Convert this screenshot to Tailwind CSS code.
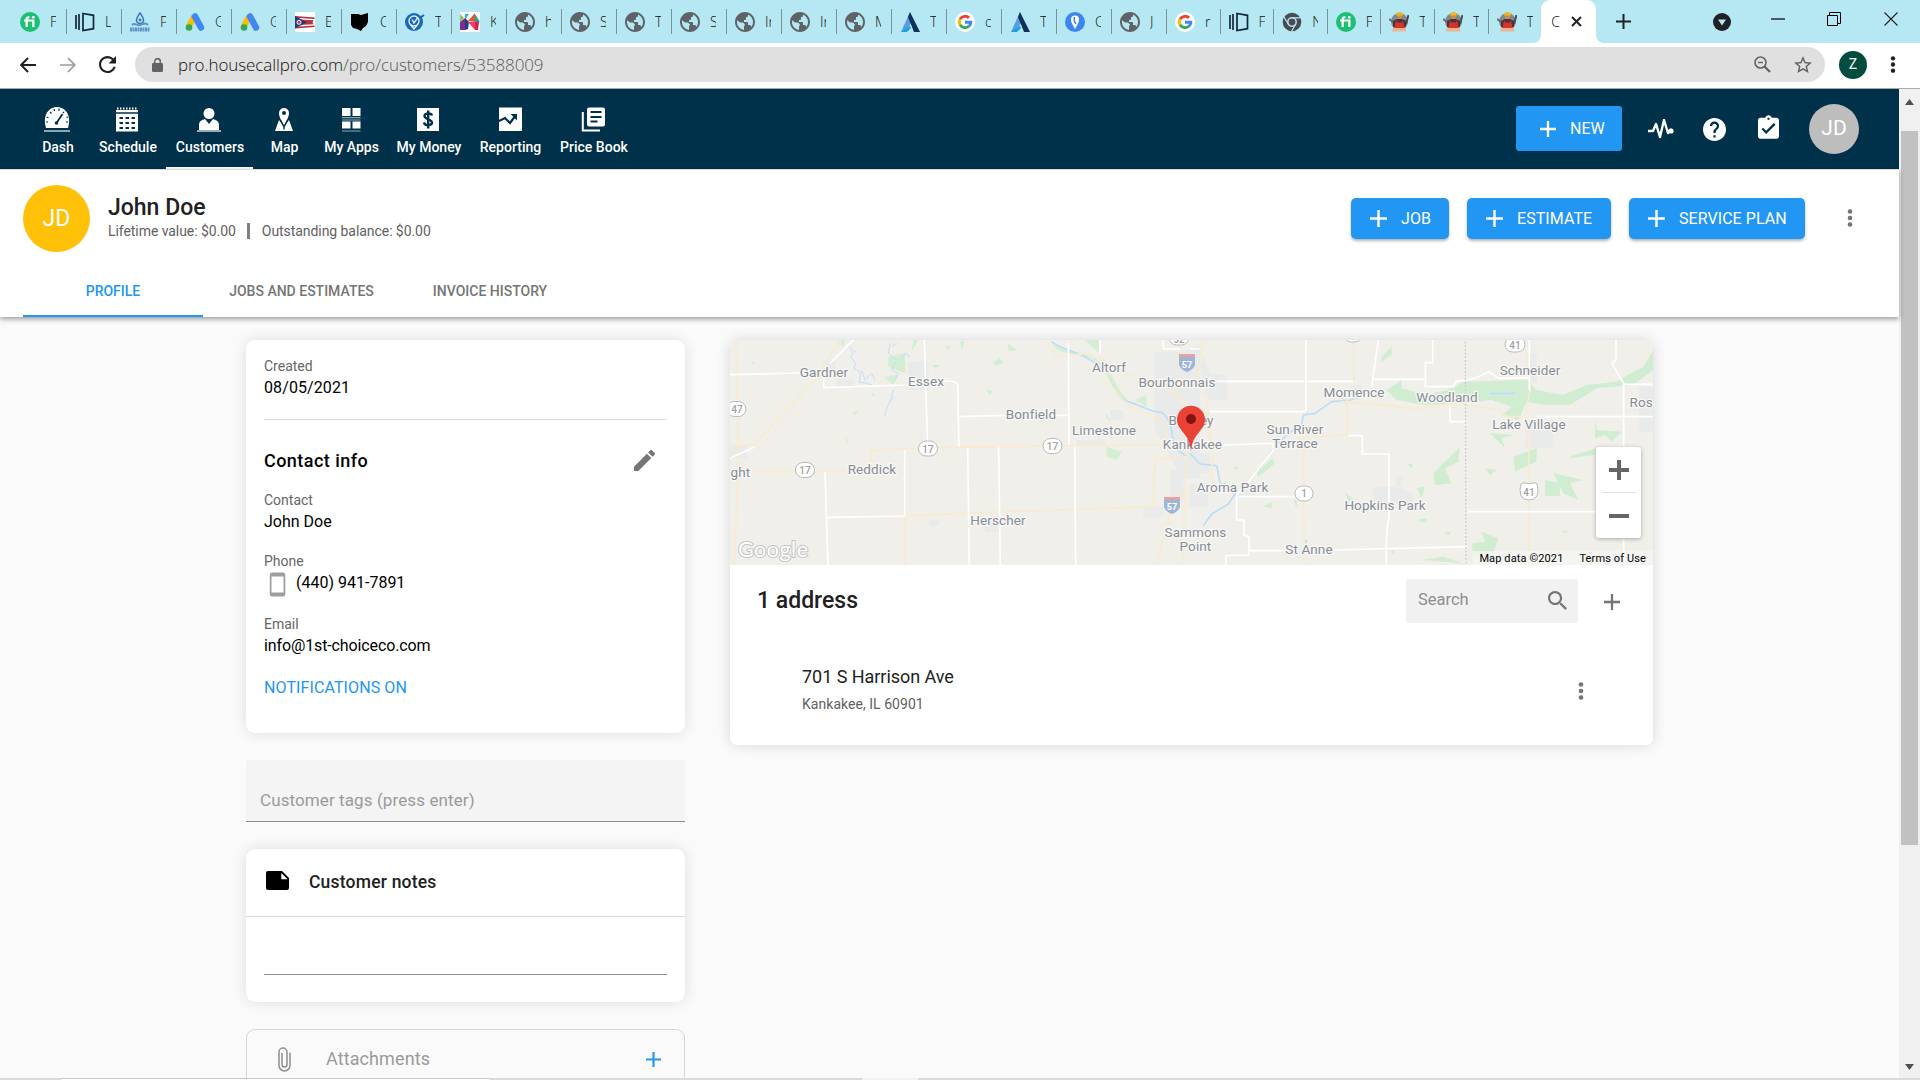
<!DOCTYPE html>
<html lang="en">
<head>
<meta charset="utf-8">
<title>John Doe - Customers</title>
<script src="https://cdn.jsdelivr.net/npm/@tailwindcss/browser@4"></script>
</head>
<body class="w-[1920px] h-[1080px] overflow-hidden bg-white font-[Roboto,sans-serif] text-black flex flex-col">

<svg class="hidden">
  <symbol id="fi" viewBox="0 0 20 20"><circle cx="10" cy="10" r="10" fill="#1dbf73"/><path d="M5.500 15V9.500H4V7.500h1.500c0-2.600 1.500-3.600 4-3.300v2C8.300 6.100 7.800 6.500 7.800 7.500H14.500v7.500h-2.300V9.500H7.800V15z" fill="#fff"/><circle cx="13.300" cy="5.300" r="1.400" fill="#fff"/></symbol>
  <symbol id="door" viewBox="0 0 20 20"><path d="M1 3v14M4 2v16M8 1.500l10.500 1.800v13.400L8 18.500z" fill="none" stroke="#14263a" stroke-width="1.700"/></symbol>
  <symbol id="drop" viewBox="0 0 20 20"><path d="M10 1c2 3 3.500 4.500 3.500 7a3.500 3.500 0 0 1-7 0c0-2.500 1.500-4 3.500-7z" fill="none" stroke="#3c78b8" stroke-width="1.600"/><circle cx="10" cy="8" r="1.400" fill="#3c78b8"/><path d="M2 13c3-3 4 1 8 0s5-3 8 0" fill="none" stroke="#5b93c9" stroke-width="2"/><path d="M0 17.500h20" stroke="#5f93cb" stroke-width="4" stroke-dasharray="2 .500"/></symbol>
  <symbol id="ads" viewBox="0 0 20 20"><path d="M9.500 4L3.500 15" stroke="#fbbc04" stroke-width="6"/><path d="M10 4.500l6 11" stroke="#4285f4" stroke-width="6.500" stroke-linecap="round"/><circle cx="4" cy="15.500" r="3.300" fill="#34a853"/></symbol>
  <symbol id="ohio" viewBox="0 0 20 20"><path fill="#fff" d="M0 0h20v20H0z"/><path d="M0 4l20 1.500-2.500 4.700L20 15 0 16.500z" fill="#b8353f"/><path d="M0 6.500l19 1.200M0 14l19-1.200" stroke="#fff" stroke-width="1.300"/><path d="M0 4l12 6.300L0 16.500z" fill="#223c7b"/><circle cx="4" cy="10.300" r="2" fill="#c33" stroke="#fff"/></symbol>
  <symbol id="state" viewBox="0 0 20 20"><path d="M1 2l7 0 3 1 7-2v9l-2 4-3 2-2 3-4-2-4-1-2-3z" fill="#000"/></symbol>
  <symbol id="pin" viewBox="0 0 20 20"><circle cx="9" cy="10" r="9" fill="#1b66b5"/><circle cx="9" cy="9" r="5" fill="none" stroke="#d8f0fa" stroke-width="1.500"/><path d="M5 12l4 5 4-5" fill="none" stroke="#d8f0fa" stroke-width="1.500"/><path d="M7 7.500l2 3.500 3.500-5" fill="none" stroke="#d8f0fa" stroke-width="1.400"/><path d="M15 6l4-3" stroke="#1b66b5" stroke-width="2"/></symbol>
  <symbol id="kk" viewBox="0 0 20 20"><path fill="#fff" d="M0 0h20v20H0z"/><path d="M0 2l4 4-4 4z" fill="#8bc34a"/><path d="M0 10l5-4v12H0z" fill="#7b2d8e"/><path d="M5 2h4l-4 6z" fill="#29b6d1"/><path d="M9 10L5 6v12l3-1z" fill="#263a8c"/><path d="M8 9l7-8v9z" fill="#e8552d"/><path d="M8 10l7 8v-8z" fill="#ef3e6d"/><path d="M15 10V2l5 8z" fill="#1aa5a0"/><path d="M15 10h4l-1 8h-3z" fill="#e01f4f"/></symbol>
  <symbol id="globe" viewBox="2 2 20 20"><path fill="#5f6368" d="M12 2C6.480 2 2 6.480 2 12s4.480 10 10 10 10-4.480 10-10S17.520 2 12 2zm-1 17.930c-3.950-.490-7-3.850-7-7.930 0-.620.080-1.210.210-1.790L7 12.500h3l2 2-1 2v3.430zm6.900-2.540c1-2-.9-2.390-1.900-2.390h-1v-2c0-.550-.450-1-1-1h-3v-2h1c.550 0 1-.450 1-1V7h1c1.100 0 1-.9 1-2v-.410c2.930 1.190 5 4.060 5 7.410 0 2.080-.8 3.970-2.100 5.390z"/></symbol>
  <symbol id="delta" viewBox="0 0 20 20"><path d="M10 0L1 20h5l5-9z" fill="#5a9be0"/><path d="M10 0l10 20h-6L8 5z" fill="#12305c"/><path d="M1 20l9-6 1 2-4 4z" fill="#12a5e8"/></symbol>
  <symbol id="goog" viewBox="0 0 20 20"><circle cx="10" cy="10" r="10" fill="#fff"/><g fill="none" stroke-width="2.900"><path d="M5 7.300a5.700 5.700 0 0 1 9-1.400" stroke="#ea4335"/><path d="M5.100 12.800a5.700 5.700 0 0 1 0-5.700" stroke="#fbbc05"/><path d="M14 14a5.700 5.700 0 0 1-9-1.400" stroke="#34a853"/><path d="M10 10.200h5.800c0 1.700-.7 3-1.800 4" stroke="#4285f4"/></g></symbol>
  <symbol id="call" viewBox="0 0 20 20"><circle cx="10" cy="10" r="10" fill="#3b86f0"/><path d="M10 17C7 12 6 10 6 7.500a4 4 0 0 1 8 0C14 10 13 12 10 17z" fill="#fff"/><path d="M9.300 5v4l1.500 3" stroke="#3b86f0" stroke-width="1.500" fill="none"/></symbol>
  <symbol id="chrome" viewBox="0 0 20 20"><circle cx="10" cy="10" r="9.300" fill="#494c50"/><circle cx="10" cy="10" r="4.200" fill="#494c50" stroke="#b5e8f2" stroke-width="1.500"/><path d="M10 5.800h8.500M6.300 12L2 5M13.700 12l-4.200 7.500" stroke="#b5e8f2" stroke-width="1.200"/></symbol>
  <symbol id="worker" viewBox="0 0 20 20"><circle cx="10.500" cy="9.500" r="8.500" fill="#7f8a8e"/><path d="M0 7l6 4" stroke="#6d6a66" stroke-width="2"/><path d="M19.500 3l-2.500 9" stroke="#4b4b4b" stroke-width="2"/><circle cx="10.500" cy="4.500" r="2.600" fill="#c98a5a"/><path d="M7 3.500a3.500 3.500 0 0 1 7 0z" fill="#f2b51c"/><path d="M4 9l4-2h5l4 2 0 6H4z" fill="#4a3436"/><path d="M7 8l1 2.500h5L14 8l1.500 8h-10z" fill="#d8322c"/><path d="M4 16h13v3.500H3z" fill="#e9b592"/></symbol>
  <symbol id="plus" viewBox="5 5 14 14"><path d="M19 13h-6v6h-2v-6H5v-2h6V5h2v6h6v2z" fill="currentColor"/></symbol>
  <symbol id="dots" viewBox="0 0 6 18"><g fill="currentColor"><circle cx="3" cy="2.500" r="2.300"/><circle cx="3" cy="9" r="2.300"/><circle cx="3" cy="15.500" r="2.300"/></g></symbol>
</svg>

<!-- Browser tab strip -->
<div class="h-[43px] shrink-0 bg-[#b5e8f2] flex pl-[11px] font-['Open_Sans',sans-serif]">
  <div id="tabs" class="flex h-full"></div>
  <div class="relative w-[55px] h-full bg-white rounded-t-[9px] flex items-center pl-[10px] text-[14px] font-light">
    <span class="absolute right-full bottom-0 size-2 bg-white"><span class="block size-2 rounded-br-lg bg-[#b5e8f2]"></span></span>
    <span class="absolute left-full bottom-0 size-2 bg-white"><span class="block size-2 rounded-bl-lg bg-[#b5e8f2]"></span></span>
    <span class="w-[10px] -mt-px">C</span>
    <svg class="ml-[10px] size-[11px]" viewBox="0 0 11 11"><path d="M1 1l9 9M10 1l-9 9" stroke="#222" stroke-width="2"/></svg>
  </div>
  <div class="flex-1 flex items-center">
    <svg class="ml-5 size-[15px]" viewBox="0 0 15 15"><path d="M7.500 0v15M0 7.500h15" stroke="#222" stroke-width="2"/></svg>
    <svg class="ml-[82px] size-[18px]" viewBox="0 0 18 18"><circle cx="9" cy="9" r="9" fill="#202124"/><path d="M5 6.500h8L9 12.500z" fill="#b5e8f2"/></svg>
    <svg class="ml-10 mb-[6px] w-[14px] h-[2px]" viewBox="0 0 14 2"><path d="M0 1h14" stroke="#000" stroke-width="1.200"/></svg>
    <svg class="ml-[42px] mb-[6px] size-[14px]" viewBox="0 0 14 14" fill="none" stroke="#000"><path d="M.5 3.500h10v10H.5zM2.500 3V.5h11v11H11"/></svg>
    <svg class="ml-[43px] mb-[6px] size-[14px]" viewBox="0 0 14 14"><path d="M.5 .5l13 13M13.500 .5l-13 13" stroke="#222" stroke-width="1.100"/></svg>
  </div>
</div>

<!-- Address bar -->
<div class="h-[46px] shrink-0 bg-white border-b border-[#a9a9a9] flex items-center pb-[2px]">
  <svg class="ml-5 size-4" viewBox="0 0 16 16" fill="none" stroke="#202124" stroke-width="2"><path d="M16 8H1.500M8 1L1.200 8 8 15"/></svg>
  <svg class="ml-6 size-4" viewBox="0 0 16 16" fill="none" stroke="#9a9a9a" stroke-width="1.700"><path d="M0 8h14.500M8 1l6.800 7L8 15"/></svg>
  <svg class="ml-[23px] size-[17px]" viewBox="4 4 16 16"><path fill="#202124" d="M17.650 6.350C16.200 4.900 14.210 4 12 4c-4.420 0-7.990 3.580-7.990 8s3.570 8 7.990 8c3.730 0 6.840-2.550 7.730-6h-2.080c-.820 2.330-3.040 4-5.650 4-3.310 0-6-2.690-6-6s2.690-6 6-6c1.660 0 3.140.690 4.220 1.780L13 11h7V4l-2.350 2.350z"/></svg>
  <div class="ml-[19px] w-[1690px] h-[35px] rounded-full bg-[#e0e0e0] flex items-center pl-[17px] pr-[13px]">
    <svg class="w-[11px] h-[14px]" viewBox="0 0 11 14"><rect y="5" width="11" height="9" rx="1.200" fill="#5f6368"/><path d="M2.700 5.500V3.500a2.800 2.800 0 0 1 5.600 0v2" fill="none" stroke="#5f6368" stroke-width="1.500"/></svg>
    <div class="ml-[15px] text-[17px] leading-none font-light tracking-[-.08px] font-['Open_Sans',sans-serif] whitespace-nowrap text-[#55585c]"><span class="text-[#111]">pro.housecallpro.com</span>/pro/customers/53588009</div>
    <div class="flex-1"></div>
    <svg class="size-[17px]" viewBox="0 0 17 17" fill="none" stroke="#5f6368"><circle cx="6.500" cy="6.500" r="5.500" stroke-width="1.600"/><path d="M10.500 10.500l5.500 5.500" stroke-width="2.200"/><path d="M4 6.500h5" stroke-width="1.400"/></svg>
    <svg class="ml-[23px] size-[18px]" viewBox="2 2 20 20"><path fill="#5f6368" d="M22 9.240l-7.190-.620L12 2 9.190 8.630 2 9.240l5.460 4.730L5.820 21 12 17.270 18.180 21l-1.630-7.030L22 9.240zM12 15.400l-3.760 2.270 1-4.280-3.320-2.880 4.380-.380L12 6.100l1.710 4.040 4.380.380-3.320 2.880 1 4.280L12 15.400z"/></svg>
  </div>
  <div class="ml-[14px] size-7 rounded-full bg-[#004d40] text-white text-[14px] flex items-center justify-center">Z</div>
  <svg class="ml-[23px] w-[6px] h-[17px] text-[#202124]"><use href="#dots"/></svg>
</div>

<div class="flex-1 min-h-0 flex">
<div class="w-[1899px] flex flex-col bg-[#fafafa]">

  <!-- Top navigation -->
  <div class="h-20 shrink-0 bg-[#00314a] text-white flex items-center pl-[26px]">
    <div class="flex h-full text-[14px] leading-5 font-medium text-center whitespace-nowrap [&>div]:flex [&>div]:flex-col [&>div]:items-center [&>div]:pt-[17px] [&_svg]:size-[26px] [&_svg]:-ml-px [&_span]:mt-[5px] [&_span]:ml-px">
      <div class="w-[63px]"><svg viewBox="0 0 26 26"><path d="M2 22C-2 9 5 1 13 1S28 9 24 22z" fill="#fff"/><path d="M0 25h26" stroke="#8fa6b2" stroke-width="2"/><path d="M12.500 17l6-9" stroke="#00314a" stroke-width="1.800"/><circle cx="12.500" cy="17" r="1.800" fill="#00314a"/><path d="M2 16h2M2.500 11l2 .8M6 6l1.500 1.500M10 3l.6 2M15 2.500V5M20 6l-1 1M24 11l-1.500.5M24 16h-2" stroke="#00314a" stroke-width="1.200"/></svg><span>Dash</span></div>
      <div class="w-[77px]"><svg viewBox="0 0 26 26"><path d="M2 4h22v21.500H2z" fill="#fff"/><path d="M3 2.500h20" stroke="#fff" stroke-width="2" stroke-dasharray="1.500 1.500"/><path d="M2 7h22" stroke="#00314a" stroke-width="1.500"/><path d="M5.500 12h16M5.500 17h16M5.500 22h16" stroke="#00314a" stroke-width="2" stroke-dasharray="3.500 2.500"/></svg><span>Schedule</span></div>
      <div class="w-[87px] relative"><svg viewBox="0 0 26 26"><circle cx="13" cy="7.500" r="5.500" fill="#fff"/><path d="M3 24v-5c0-4 3-5 6-6l4 5 4-5c3 1 6 2 6 6v5z" fill="#fff"/><path d="M1 25h24" stroke="#cdd8de" stroke-width="1.500"/></svg><span>Customers</span><i class="absolute inset-x-0 bottom-0 h-[2px] bg-white"></i></div>
      <div class="w-[62px]"><svg viewBox="0 0 26 26"><path d="M8 14L4 25h18l-4-11-5 7z" fill="#fff"/><path d="M13 20C10 14 8 10.500 8 7a5 5 0 0 1 10 0c0 3.500-2 7-5 13z" fill="#fff"/><circle cx="13" cy="7" r="2" fill="#00314a"/><path d="M9.500 14l3.500 7 3.500-7M13 21v2.500" fill="none" stroke="#00314a" stroke-width="1.400"/></svg><span>Map</span></div>
      <div class="w-[72px]"><svg viewBox="0 0 26 26"><path d="M4 2h8.500v8H4zM14.500 2h8v8h-8zM4 15.500h8.500v7H4zM14.500 15.500h8v7h-8z" fill="#fff"/><path d="M4 11.700h18.500M4 14h18.500M4 25h18.500" stroke="#8fa6b2" stroke-width="1.200"/></svg><span>My Apps</span></div>
      <div class="w-[83px]"><svg viewBox="0 0 26 26"><path d="M2 2h22v23H2z" fill="#fff"/><path d="M17 9.500C16.500 7 9.500 6.500 9.500 10s7.500 3 7.500 6.500-7.500 3.500-8 0M13.200 4.500v18" fill="none" stroke="#00314a" stroke-width="2.400"/></svg><span>My Money</span></div>
      <div class="w-20"><svg viewBox="0 0 26 26"><path d="M2 1.500h23V25H2z" fill="#fff"/><path d="M2 15l6-3 5 5 6-8" fill="none" stroke="#00314a" stroke-width="2.200"/><path d="M13.500 8h6.500v6.500z" fill="#00314a"/></svg><span>Reporting</span></div>
      <div class="w-[87px]"><svg viewBox="0 0 26 26"><rect x="7" y="1.500" width="18" height="19" rx="2" fill="#fff"/><path d="M2.800 6v18.500H20" fill="none" stroke="#fff" stroke-width="2"/><path d="M10.500 6h11M10.500 11h11M10.500 15.500h7" stroke="#00314a" stroke-width="2"/></svg><span>Price Book</span></div>
    </div>
    <div class="flex-1"></div>
    <div class="w-[106px] h-[45px] -mt-px rounded-[3px] bg-[#2196f3] flex items-center pl-6 text-[16px]"><svg class="size-4 mr-[14px]"><use href="#plus"/></svg>NEW</div>
    <svg class="ml-[26px] w-[26px] h-5" viewBox="0 0 26 20"><path d="M0 12h5l3-7 4 13 4-17 4 13 2-3h2" fill="none" stroke="#fff" stroke-width="2.400" stroke-linejoin="round"/><circle cx="23" cy="12" r="2.600" fill="#fff"/></svg>
    <svg class="ml-[29px] size-[23px]" viewBox="2 2 20 20"><path fill="#fff" d="M12 2C6.480 2 2 6.480 2 12s4.480 10 10 10 10-4.480 10-10S17.520 2 12 2zm1 17h-2v-2h2v2zm2.070-7.750l-.9.920C13.450 12.900 13 13.500 13 15h-2v-.5c0-1.100.450-2.100 1.170-2.830l1.240-1.260c.370-.360.590-.860.590-1.410 0-1.100-.9-2-2-2s-2 .9-2 2H8c0-2.210 1.790-4 4-4s4 1.790 4 4c0 .880-.360 1.680-.930 2.250z"/></svg>
    <svg class="ml-8 w-[21px] h-[24px] -mt-1" viewBox="3 1 18 20"><path fill="#fff" d="M19 3h-4.180C14.400 1.840 13.300 1 12 1c-1.300 0-2.400.840-2.820 2H5c-1.100 0-2 .9-2 2v14c0 1.100.9 2 2 2h14c1.100 0 2-.9 2-2V5c0-1.100-.9-2-2-2zm-7 0c.550 0 1 .450 1 1s-.450 1-1 1-1-.450-1-1 .450-1 1-1zm-2 14l-4-4 1.410-1.410L10 14.170l6.590-6.590L18 9l-8 8z"/></svg>
    <div class="ml-[30px] mr-10 size-[50px] rounded-full bg-[#bdbdbd] flex items-center justify-center text-[21px]">JD</div>
  </div>

  <!-- Customer header -->
  <div class="relative z-10 h-[148px] shrink-0 bg-white border-t border-[#dcdcdc] shadow-[0_2px_5px_rgba(0,0,0,.4)] flex flex-col px-[23px]">
    <div class="flex pt-[15px]">
      <div class="size-[67px] rounded-full bg-[#ffc107] text-white text-[23px] flex items-center justify-center pt-px">JD</div>
      <div class="ml-[18px] pt-[9px]">
        <div class="text-[23px] leading-7 font-medium text-[#212121]">John Doe</div>
        <div class="flex items-center text-[14px] leading-[18px] text-[#616161] tracking-[-.06px]">Lifetime value: $0.00<i class="ml-[11px] mr-3 w-[3px] h-4 bg-[#808080]"></i>Outstanding balance: $0.00</div>
      </div>
      <div class="flex-1"></div>
      <div class="flex gap-[18px] pt-[13px] text-[16px] text-white [&>div]:h-[41px] [&>div]:rounded-[5px] [&>div]:bg-[#2196f3] [&>div]:flex [&>div]:items-center [&>div]:pl-[19px] [&>div]:shadow-[0_2px_3px_rgba(0,0,0,.3)] [&_svg]:size-[17px] [&_svg]:mr-[14px] tracking-[.06px]">
        <div class="w-[98px]"><svg><use href="#plus"/></svg>JOB</div>
        <div class="w-36"><svg><use href="#plus"/></svg>ESTIMATE</div>
        <div class="w-44"><svg><use href="#plus"/></svg>SERVICE PLAN</div>
      </div>
      <svg class="ml-[42px] mr-[23px] mt-[24px] w-[6px] h-[18px] text-[#757575]"><use href="#dots"/></svg>
    </div>
    <div class="mt-auto h-[51px] flex text-[14px] font-medium text-[#757575] [&>div]:flex [&>div]:justify-center [&>div]:pt-[15px] leading-5">
      <div class="w-[180px] border-b-2 border-[#2196f3] text-[#2196f3]">PROFILE</div>
      <div class="w-[197px]">JOBS AND ESTIMATES</div>
      <div class="w-[180px]">INVOICE HISTORY</div>
    </div>
  </div>

  <!-- Body columns -->
  <div class="flex-1 min-h-0 overflow-hidden flex items-start pl-[246px] pt-[23px] gap-[45px]">
    <div class="w-[439px] flex flex-col">
      <div class="h-[393px] rounded-[9px] bg-white shadow-[0_0_14px_rgba(0,0,0,.12)] px-[18px] pt-4 text-[16px] leading-6">
        <div class="text-[14px] leading-5 text-[#666]">Created</div>
        <div class="tracking-[.1px]">08/05/2021</div>
        <div class="mt-[19px] h-px bg-[#dcdcdc]"></div>
        <div class="mt-7 h-6 flex justify-between items-center pr-3 text-[18px] font-medium tracking-[.45px]"><span class="mt-[2px]">Contact info</span>
          <svg class="size-[21px]" viewBox="3 3 18 18"><path fill="#757575" d="M3 17.250V21h3.750L17.810 9.940l-3.750-3.750L3 17.250zM20.710 7.040c.390-.390.390-1.020 0-1.410l-2.340-2.340c-.390-.390-1.020-.390-1.410 0l-1.830 1.830 3.750 3.750 1.830-1.830z"/></svg></div>
        <div class="mt-[18px] text-[14px] leading-5 text-[#666]">Contact</div>
        <div>John Doe</div>
        <div class="mt-[17px] text-[14px] leading-5 text-[#666]">Phone</div>
        <div class="flex h-6"><svg class="ml-[5px] mr-[10px] mt-px w-[17px] h-[25px] shrink-0" viewBox="0 0 17 25"><rect x=".800" y=".500" width="15.500" height="24" rx="2.500" fill="#9e9e9e"/><path d="M2.500 4.500h12v16h-12z" fill="#fff"/></svg><span>(440) 941-7891</span></div>
        <div class="mt-[19px] text-[14px] leading-5 text-[#666]">Email</div>
        <div class="tracking-[-.12px]">info@1st-choiceco.com</div>
        <div class="mt-[18px] text-[#2196f3] tracking-[.1px]">NOTIFICATIONS ON</div>
      </div>

      <div class="mt-[27px] h-[62px] rounded-t-[4px] bg-[#f4f4f4] border-b border-[#8c8c8c] pl-[14px] pt-[28px] text-[17px] leading-6 text-[#9a9a9a] tracking-[.1px]">Customer tags (press enter)</div>

      <div class="mt-[27px] h-[153px] rounded-[9px] bg-white shadow-[0_0_14px_rgba(0,0,0,.12)]">
        <div class="h-[68px] border-b border-[#dcdcdc] flex items-center pl-5 text-[17.500px] font-medium tracking-[.2px] text-[#212121]"><svg class="w-[23px] h-[19px] mr-5 -mt-[5px]" viewBox="0 0 23 19"><path d="M2 0h14l7 7v10a2 2 0 0 1-2 2H2a2 2 0 0 1-2-2V2a2 2 0 0 1 2-2z"/><path d="M15.300 2v6.200h6.300z" fill="#fff"/></svg><span>Customer notes</span></div>
        <div class="mx-[18px] h-[58px] border-b border-[#8c8c8c]"></div>
      </div>

      <div class="mt-[27px] h-[80px] rounded-[9px] border border-[#d6d6d6] flex items-start pt-[17px] pl-[31px]">
        <svg class="w-[13px] h-[25px]" viewBox="0 0 13 25" fill="none" stroke="#8f8f8f" stroke-width="1.500" stroke-linecap="round"><path d="M12 6v12.500a5.500 5.500 0 0 1-11 0V5a4 4 0 0 1 8 0v12.500a2.500 2.500 0 0 1-5 0V6.500"/></svg>
        <span class="ml-[35px] text-[18px] leading-6 text-[#9a9a9a] flex-1 tracking-[.1px]">Attachments</span>
        <svg class="size-[15px] mt-[5px] mr-[23px] text-[#2196f3]"><use href="#plus"/></svg>
      </div>
    </div>

    <div class="w-[923px] h-[405px] rounded-[7px] bg-white overflow-hidden shadow-[0_0_14px_rgba(0,0,0,.14)] flex flex-col">
      <!-- Map -->
      <div class="relative h-[225px] shrink-0 bg-[#f0efea]">
        <svg class="w-[923px] h-[225px] block" viewBox="0 0 923 225">
          <g transform="translate(-10 -10) scale(.33333)" fill="none" stroke-linejoin="round">
            <path d="M1305 65h80l55-20v400h-55l-80-150zM310 90h35l5 40h-40zM350 148h52v22h-52zM565 95h60v85h-60zM1070 330h85v17h-85zM1170 240h40v30h-40zM30 345h50v40H30zM628 571h28v18h-28zM795 585h42v20h-42zM1270 530h60v30h-60zM1350 420h40v90h-40z" fill="#e9eaea"/>
            <path d="M985 30c20 40 100 20 160 70 40 40 50 90 80 110l-15 0c-50-60-50-110-110-130-60-10-90-10-115-50zM1095 30h45v42zM505 80l50-10v60l-50-20zM490 140l45-5-15 30zM1160 350l45 15-15 25-30-10zM820 95l20-10 10 15-25 8zM865 40l25 20-25 3zM797 178l22 6-10 10zM635 105h25l-12 12zM395 250l18-8-5 14zM580 30h15l-20 35zM1245 210l35-15v35zM1155 245l20 30-15-10zM355 30h20l-5 20zM675 45l15 5-5 12zM380 320l3 18-6 0zM720 35l15-5-10 30z" fill="#d3eed3"/>
            <path d="M390 50l8 20-6 10 15 20-5 15 20 12-4 30 22 2 15 6M400 60l10 10M425 120l10 30 20-20 10 20M510 40l-5 30 25 20-15 30 20 10-10 20M545 90l10-20 15 10M520 180l-8 30-10 20-8 28M525 200l-12 12M515 50l15-10M455 190l8 8M98 102l3-6" stroke="#bfe0f8" stroke-width="3"/>
            <path d="M995 35c30 30 80 20 150 80 40 50 40 90 80 100 50 15 60 30 100 32 30 20 30 60 35 90s50 40 80 75" stroke="#b9def9" stroke-width="5"/>
            <path d="M47 30l10 340-15 335M30 355l75-15 180-190 70-110 10-10M100 422h285M450 395l5-35 230-8 380-5 280-2M555 705v-148l180-7 565-20 5-145 100-5M980 35l30 45 100-10 60 40 170 70 60 40M1140 75c20 80 60 150 130 170 60 20 70 50 75 100M1375 30l3 190M1410 370l-15 50-5 280M1310 700l15-60 40-140 20-15h55" stroke="#f8ebce" stroke-width="5"/>
            <path d="M30 134l210-5M30 385l75-35M330 100l70-70M311 120v53l250-8 120-12q30 0 32 12l4 185M613 30l10 325M717 260l140-4h190M1045 40l2 305M1140 30v42M1330 30v27h50M315 425l9 280M322 562l232-4V360M743 355l5 350M836 352l5 353M1064 350l3 355" stroke="#fff" stroke-width="5"/>
          </g>
          <g transform="translate(460 -10) scale(.33333)" fill="none" stroke-linejoin="round">
            <path d="M0 370h60v60H0zM0 460h55v70H0zM40 75l20 55 50 5v75H55L30 120zM480 165h35v45h-35zM550 470h70l50 20v30H550zM1010 275h78v80h-85zM1010 70h30v90h-30zM1348 170h40v135h-40zM620 440l15-5v35h-15zM135 480h60v25h-60z" fill="#e9eaea"/>
            <path d="M590 180l45-30v25l75 20 60-15 50-25 190-5 30 30 80 15 70-30 90-10 50-30 30-15 30-50v60l-60 45-110 10-80 50h-70l-60-10-25 55-50-15 30-25-60-20-80 10-120 5-85-15zM575 80l30-30v25l-30 20zM970 380l70-25v40l-65 30zM730 430l80-80-5 45-40 20 20 45-50 5zM1065 450l45 10v38h-45zM1090 430l90 20-40 10 25 50-45-20zM845 640l40-5-10-30 50 20-15 45-60 5 5 30zM1140 380l80-25-10 20-70 10zM1215 265l5 35 75 5-30 30-20-20-30 10zM680 475l25-5-10 35zM220 530l25-15v20zM200 430l45-45 10 15-50 40zM465 490l30 20-20 5zM680 570l30-5v15zM760 605h20v12zM900 310l75 5-40 10 10 30zM885 415l35 5-20 15zM690 690l70-10 60 20zM650 400l20 5-5 10zM570 575l10 15zM310 510h10v25zM130 415l12-7v12zM980 120l40 0-30 10zM740 38l10-8zM1115 605l20-5-10 10zM600 665l12-4v10z" fill="#d0edd2"/>
            <path d="M0 370l30 32 50 5 10 50 45 35-20 30-50 30-25 35M205 420l50-70 40-40 40-25 5-30 35-5 50-35 55-5 30-10M900 190h75M345 640l5-10" stroke="#b9def9" stroke-width="5"/>
            <path d="M38 30l-15 140 25 30 20 180-5 70M490 30l3 165-22 15v105l-130 5v220l2 165M520 220l160 15 120-15 130 20 20 20h55l15-80-5-90-30-60M1005 265l12 50v390M455 215l60 5" stroke="#f8ebce" stroke-width="5"/>
            <path d="M0 57h30M348 30v210l-10 5H60M80 154h410M100 345l150-5v20l-70 90-40 45v75h22v45l15 5v55l-70 2v40l-15 0M180 662h110M145 500h170M430 660l400-10M565 30l-20 140M550 148h155M728 30v68h-22v72h85l5-15 60-10 40-20 30 20 90-2M1018 30v150M1278 30v60l-12 10 35 60v545M1301 163h88M1040 260h348M780 225v50h45M475 317h42v55h80v190c-10 40-8 90-8 143M832 545h385" stroke="#fff" stroke-width="5"/>
            <path d="M826 35l2 670" stroke="#c9c9c9" stroke-width="4" stroke-dasharray="5 6"/>
          </g>
          <!-- Route shields -->
          <g fill="#fff" stroke="#b9b9b9" stroke-width="1"><rect x="-3" y="61.500" width="19" height="15" rx="7.500"/><rect x="65.500" y="122.500" width="19" height="15" rx="7.500"/><rect x="188.500" y="101" width="19" height="15" rx="7.500"/><rect x="313" y="98.500" width="19" height="15" rx="7.500"/><rect x="439" y="-10" width="20" height="15" rx="7.500"/><rect x="565" y="146" width="18" height="15" rx="7.500"/><rect x="775" y="-3" width="20" height="15" rx="7.500"/><rect x="614" y="-13" width="18" height="15" rx="7.500"/><path d="M791 144q3-2 4-1 4 1.500 8 0 2-1 4 1l1 6-1 6q-3 4-8 4-5 0-8-4l-1-6z"/></g>
          <g font-family="Roboto,sans-serif" font-size="10" font-weight="500" fill="#a0a0a0" text-anchor="middle"><text x="7" y="73">47</text><text x="75" y="134">17</text><text x="198" y="112.500">17</text><text x="322.500" y="110">17</text><text x="449" y="3">52</text><text x="574" y="157">1</text><text x="785" y="8.500">41</text><text x="799" y="155.500">41</text></g>
          <g fill="#9db6d6"><path d="M449 17h16v8q-2 5-8 7-6-2-8-7zM434 159h16v8q-2 5-8 7-6-2-8-7z"/><path d="M449 14h16v3h-16zM434 157h16v3h-16z" fill="#e6a3a5"/></g>
          <g font-family="Roboto,sans-serif" font-size="9" font-weight="700" fill="#fff" text-anchor="middle"><text x="457" y="27.500">57</text><text x="442" y="170">57</text></g>
          <!-- Place names -->
          <g font-family="Roboto,sans-serif" font-size="13.500" fill="#878c94" stroke="#f7f7f5" stroke-width="2.500" paint-order="stroke" text-anchor="middle" letter-spacing=".1">
            <text x="94" y="37">Gardner</text><text x="196" y="46">Essex</text><text x="301" y="79">Bonfield</text><text x="374" y="95">Limestone</text><text x="379" y="32">Altorf</text><text x="447" y="47">Bourbonnais</text><text x="461" y="84.500">Bradley</text><text x="462.500" y="108.500">Kankakee</text><text x="142" y="133.500">Reddick</text><text x="0.500" y="136.500" text-anchor="start">ght</text><text x="268" y="185">Herscher</text><text x="502.500" y="152">Aroma Park</text><text x="565" y="94">Sun River</text><text x="565" y="107.500">Terrace</text><text x="624" y="57">Momence</text><text x="717" y="62">Woodland</text><text x="800" y="35">Schneider</text><text x="799" y="89">Lake Village</text><text x="899.500" y="66.500" text-anchor="start">Ros</text><text x="655" y="170">Hopkins Park</text><text x="579" y="214">St Anne</text><text x="465.500" y="197">Sammons</text><text x="465.500" y="210.500">Point</text>
          </g>
          <text x="8" y="217" font-family="Lato,sans-serif" font-size="21.500" fill="#fff" stroke="#c4c4c2" stroke-width="2" paint-order="stroke" textLength="70">Google</text>
          <path d="M461 111.500c-1-13-6-16-10-22a14 14 0 1 1 20 0c-4 6-9 9-10 22z" fill="#ea4335"/><circle cx="461" cy="79" r="5" fill="#811411"/>
        </svg>
        <div class="absolute right-0 bottom-0 h-[14px] bg-[#f5f5f2]/80 flex items-center pl-[6px] pr-[7px] text-[11px] leading-none text-black gap-[16px] tracking-[.12px]"><span>Map data ©2021</span><span>Terms of Use</span></div>
        <div class="absolute left-[866px] top-[107px] w-[45px] h-[91px] bg-white rounded-[3px] shadow-[0_1px_4px_rgba(0,0,0,.3)]">
          <svg class="block size-full" viewBox="0 0 45 91"><path d="M13 23h20M23 13v20M13 69h20" stroke="#666" stroke-width="4"/><path d="M6 45.500h34" stroke="#e0e0e0"/></svg>
        </div>
      </div>
      <div class="flex items-center h-[44px] mt-[14px] pl-[27px] pr-8">
        <div class="text-[23px] font-medium text-[#212121] flex-1">1 address</div>
        <div class="w-[172px] h-[44px] bg-[#f1f1f1] rounded-[2px] flex items-center pl-3 pr-[11px] text-[16.500px] text-[#8e8e8e]"><span class="flex-1 -mt-px">Search</span><svg class="size-[19px] -mt-[2px]" viewBox="3 3 17.500 17.500"><path fill="#757575" d="M15.500 14h-.790l-.280-.270C15.410 12.590 16 11.110 16 9.500 16 5.910 13.090 3 9.500 3S3 5.910 3 9.500 5.910 16 9.500 16c1.610 0 3.090-.590 4.230-1.570l.270.280v.790l5 4.990L20.490 19l-4.990-5zm-6 0C7.010 14 5 11.990 5 9.500S7.010 5 9.500 5 14 7.010 14 9.500 11.990 14 9.500 14z"/></svg></div>
        <svg class="ml-[26px] mr-px mt-[2px] size-4 text-[#757575]"><use href="#plus"/></svg>
      </div>
      <div class="flex pt-[42px] pl-[72px] pr-[69px]">
        <div class="flex-1">
          <div class="text-[18px] leading-6 text-[#212121] tracking-[-.04px]">701 S Harrison Ave</div>
          <div class="mt-[5px] text-[14px] leading-5 text-[#616161] tracking-[.04px]">Kankakee, IL 60901</div>
        </div>
        <svg class="w-[6px] h-[18px] mt-[17px] text-[#757575]"><use href="#dots"/></svg>
      </div>
    </div>
  </div>
</div>

<!-- Page scrollbar -->
<div class="w-[21px] bg-[#f0f0f0] flex flex-col items-center">
  <svg class="mt-[10px] w-[9px] h-[6px]" viewBox="0 0 9 6"><path d="M4.500 0L9 6H0z" fill="#505050"/></svg>
  <div class="mt-[26px] w-[17px] h-[714px] bg-[#c1c1c1]"></div>
  <svg class="mt-auto mb-[8px] w-[9px] h-[6px]" viewBox="0 0 9 6"><path d="M4.500 6L9 0H0z" fill="#505050"/></svg>
</div>
</div>

<!-- Taskbar edge -->
<div class="h-[2px] shrink-0 bg-[#dadada] flex"><i class="ml-[61px] w-[428px] border-t border-[#c8c8c8] bg-white"></i><i class="ml-[373px] w-[56px] bg-[#f2f2f2]"></i></div>

<script>
  const tabs = [['fi','F'],['door','L'],['drop','P'],['ads','G'],['ads','G'],['ohio','E'],['state','O'],['pin','T'],['kk','K'],['globe','h'],['globe','S'],['globe','T'],['globe','S'],['globe','In'],['globe','In'],['globe','M'],['delta','T'],['goog','c'],['delta','T'],['call','C'],['globe','J'],['goog','r'],['door','F'],['chrome','N'],['fi','F'],['worker','T'],['worker','T'],['worker','T']];
  document.getElementById('tabs').innerHTML = tabs.map(([icon, title], i) =>
    `<div class="h-full flex items-center relative" style="width:${i < 21 ? 55 : 53.6}px">
      <svg class="ml-[9px] size-5 shrink-0"><use href="#${icon}"/></svg>
      <span class="ml-[10px] w-[6px] -mt-px overflow-hidden text-[14px] font-light text-[#111] whitespace-nowrap">${title}</span>
      ${i < tabs.length - 1 ? '<i class="absolute -right-px top-[9px] w-px h-[25px] bg-[#7b9299]"></i>' : ''}
    </div>`).join('');
</script>
</body>
</html>
